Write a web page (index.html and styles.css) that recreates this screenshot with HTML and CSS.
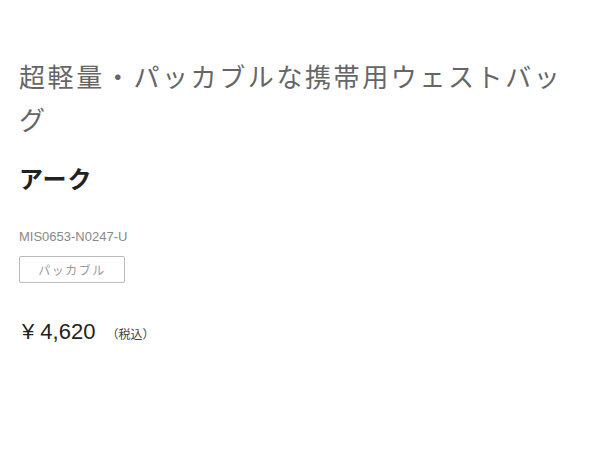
FILE: index.html
```html
<!DOCTYPE html>
<html lang="ja">
<head>
    <meta charset="UTF-8">
    <meta name="viewport" content="width=device-width, initial-scale=1.0">
    <title>アーク</title>
    <link rel="stylesheet" href="styles.css">
</head>
<body>
    <div class="item">
        <h1 class="catch">超軽量・パッカブルな携帯用ウェストバッグ</h1>
        <h2 class="name">アーク</h2>
        <p class="code">MIS0653-N0247-U</p>
        <div class="tags">
            <span class="tag">パッカブル</span>
        </div>
        <p class="price">¥ 4,620<span class="tax">（税込）</span></p>
    </div>
</body>
</html>
```

FILE: styles.css
```css
/* 全体 */
body{
    margin: 0;
    background-color: #fff;
    font-family: "Noto Sans CJK JP", "Noto Sans", sans-serif;
}
.item{
    padding: 54px 19px 0;
}
/* キャッチコピー */
.catch{
    margin: 0;
    font-size: 26px;
    font-weight: normal;
    line-height: 43px;
    letter-spacing: 2.6px;
    color: #666;
}
/* 商品名 */
.name{
    margin: 21px 0 0;
    font-size: 24px;
    font-weight: bold;
    line-height: 34px;
    letter-spacing: 1px;
    color: #222;
}
/* 品番 */
.code{
    margin: 33px 0 0;
    font-family: "Liberation Sans", sans-serif;
    font-size: 13px;
    line-height: 18px;
    color: #888;
}
.tags{
    display: flex;
    margin-top: 10px;
}
.tag{
    display: block;
    width: 104px;
    height: 25px;
    border: 1px solid #bbb;
    border-radius: 2px;
    font-size: 12px;
    line-height: 25px;
    letter-spacing: 1.5px;
    text-align: center;
    color: #999;
}
/* 価格 */
.price{
    margin: 35px 0 0;
    padding-left: 3px;
    font-family: "Liberation Sans", sans-serif;
    font-size: 22px;
    line-height: 28px;
    color: #222;
}
.tax{
    margin-left: 11px;
    font-family: "Noto Sans CJK JP", sans-serif;
    font-size: 12px;
    color: #444;
}
```
